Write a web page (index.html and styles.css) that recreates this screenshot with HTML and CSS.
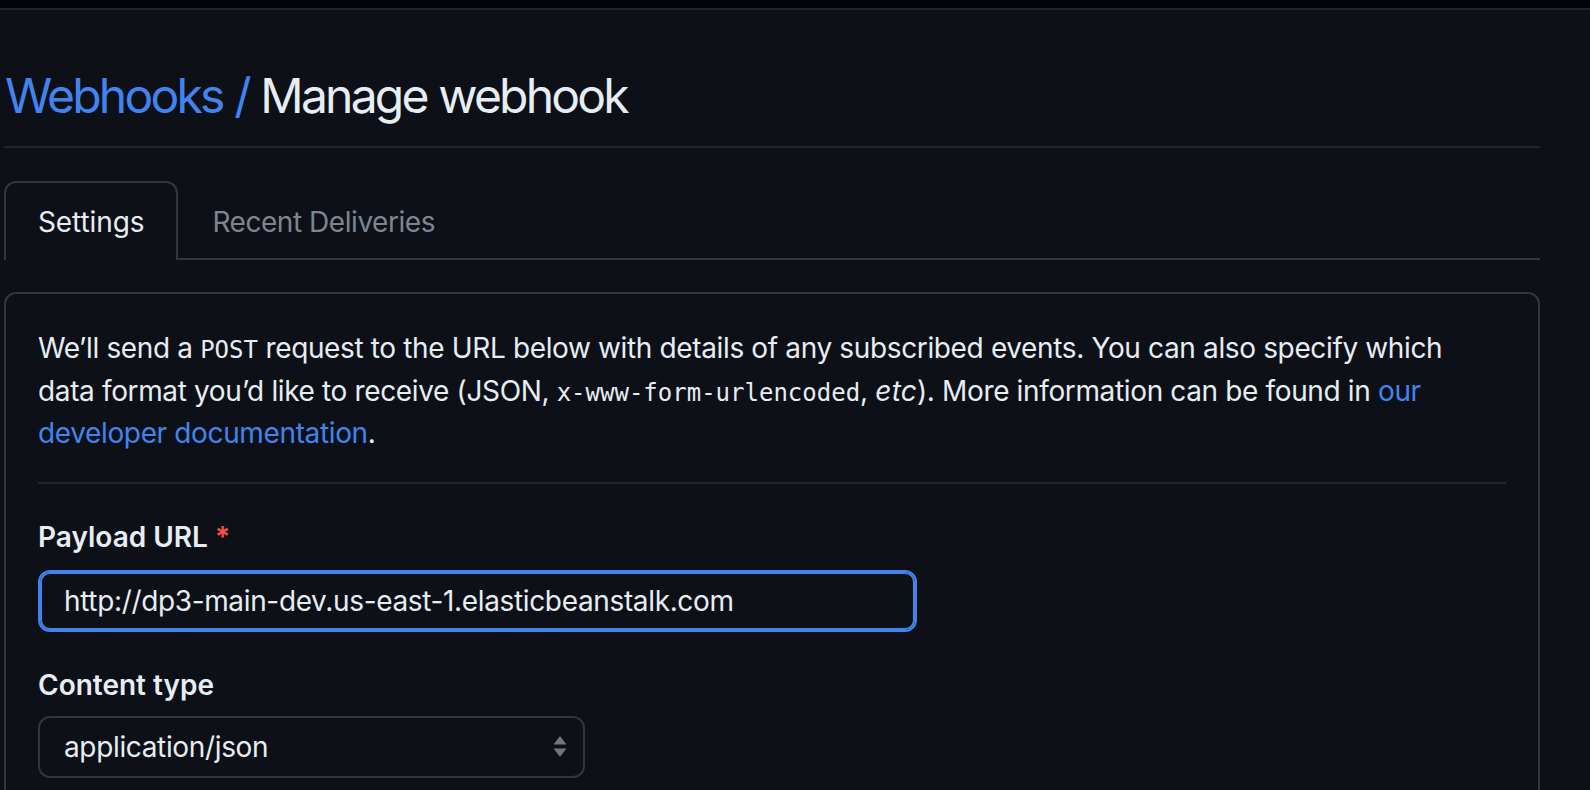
FILE: index.html
```html
<!DOCTYPE html>
<html lang="en">
<head>
<meta charset="utf-8">
<title>Manage webhook</title>
<link rel="stylesheet" href="styles.css">
</head>
<body>
<div class="topbar"></div>
<main class="page">
  <div class="subhead">
    <h2 class="subhead-heading"><a class="crumb" href="#">Webhooks /</a> Manage webhook</h2>
  </div>
  <nav class="tabnav">
    <a class="tab selected" href="#">Settings</a>
    <a class="tab" href="#">Recent Deliveries</a>
  </nav>
  <section class="box">
    <p class="intro">We’ll send a <code>POST</code> request to the URL below with details of any subscribed events. You can also specify which data format you’d like to receive (JSON, <code>x-www-form-urlencoded</code>, <em>etc</em>). More information can be found in <a class="link" href="#">our developer documentation</a>.</p>
    <hr class="sep">
    <div class="form-group first">
      <label class="label">Payload URL <span class="req">*</span></label>
      <div class="input focused">http://dp3-main-dev.us-east-1.elasticbeanstalk.com</div>
    </div>
    <div class="form-group second">
      <label class="label">Content type</label>
      <div class="select">
        <span>application/json</span>
        <svg class="arrows" width="14" height="21" viewBox="0 0 14 21"><path d="M7 0 L13.5 8.5 L0.5 8.5 Z" fill="#6e7681"/><path d="M7 21 L13.5 12.5 L0.5 12.5 Z" fill="#6e7681"/></svg>
      </div>
    </div>
  </section>
</main>
</body>
</html>
```
FILE: styles.css
```css
* { box-sizing: border-box; }
html, body { margin: 0; padding: 0; }
body {
  background: #0d1117;
  color: #e6edf3;
  font-family: Inter, "Noto Sans", "Liberation Sans", sans-serif;
  overflow: hidden;
}
.topbar {
  height: 10px;
  background: #010409;
  border-bottom: 2px solid #21262d;
}
.page {
  width: 1536px;
  margin-left: 4px;
}
.subhead {
  margin-top: 56px;
  padding-bottom: 20px;
  border-bottom: 2px solid #21262d;
}
.subhead-heading {
  margin: 0;
  padding-left: 1px;
  font-size: 48px;
  line-height: 60px;
  font-weight: 400;
  letter-spacing: -2.8px;
  word-spacing: 1px;
}
.crumb { color: #4184ef; text-decoration: none; }
.tabnav {
  margin-top: 33px;
  display: flex;
  border-bottom: 2px solid #30363d;
}
.tab {
  display: block;
  padding: 18px 32px 17px;
  border: 2px solid transparent;
  border-bottom: 0;
  border-radius: 12px 12px 0 0;
  margin-bottom: -2px;
  font-size: 28px;
  line-height: 42px;
  letter-spacing: -0.45px;
  color: #7d8590;
  text-decoration: none;
}
.tab.selected {
  color: #e6edf3;
  border-color: #30363d;
  background: #0d1117;
  letter-spacing: -0.1px;
}
.box {
  margin-top: 32px;
  border: 2px solid #30363d;
  border-radius: 12px;
  padding: 33px 32px 64px;
}
.intro {
  margin: 0;
  font-size: 28px;
  line-height: 42.6px;
  letter-spacing: -0.36px;
}
.intro code {
  font-family: "DejaVu Sans Mono", "Liberation Mono", monospace;
  font-size: 24px;
  line-height: 1;
  letter-spacing: 0;
}
.intro em { letter-spacing: 0.2px; }
.link { color: #4184ef; text-decoration: none; }
.sep {
  margin: 27px 0 0;
  border: 0;
  border-top: 2px solid #21262d;
  height: 0;
}
.form-group.first { margin-top: 32px; }
.form-group.second { margin-top: 32px; }
.label {
  display: block;
  font-size: 28px;
  line-height: 42px;
  font-weight: 600;
  margin-bottom: 12px;
}
.second .label { margin-bottom: 10px; }
.req { color: #f85149; }
.input {
  width: 879px;
  height: 62px;
  border: 2px solid #4184ef;
  box-shadow: inset 0 0 0 2px #4184ef;
  border-radius: 12px;
  padding: 0 24px;
  font-size: 28px;
  line-height: 58px;
  letter-spacing: -0.35px;
  background: #0d1117;
}
.select {
  width: 547px;
  height: 62px;
  border: 2px solid #30363d;
  border-radius: 12px;
  padding: 0 16px 0 24px;
  font-size: 28px;
  line-height: 58px;
  letter-spacing: -0.35px;
  display: flex;
  align-items: center;
  justify-content: space-between;
}
```
